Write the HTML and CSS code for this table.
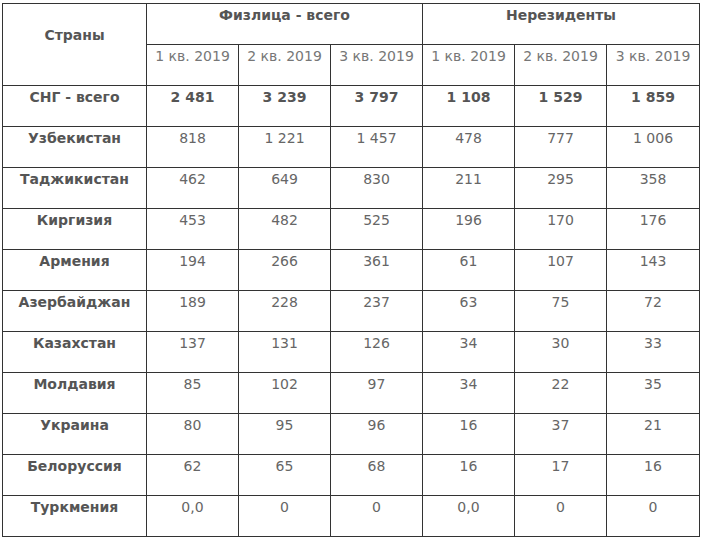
FILE: index.html
```html
<!DOCTYPE html>
<html lang="ru">
<head>
<meta charset="utf-8">
<title>Страны</title>
<link rel="stylesheet" href="styles.css">
</head>
<body>
<table class="data">
  <colgroup>
    <col class="c-country">
    <col class="c-num"><col class="c-num"><col class="c-num">
    <col class="c-num"><col class="c-num"><col class="c-last">
  </colgroup>
  <thead>
    <tr>
      <th rowspan="2" class="country-head">Страны</th>
      <th colspan="3" class="group">Физлица - всего</th>
      <th colspan="3" class="group">Нерезиденты</th>
    </tr>
    <tr class="sub">
      <td>1 кв. 2019</td><td>2 кв. 2019</td><td>3 кв. 2019</td>
      <td>1 кв. 2019</td><td>2 кв. 2019</td><td>3 кв. 2019</td>
    </tr>
  </thead>
  <tbody>
    <tr class="total"><th>СНГ - всего</th><td>2 481</td><td>3 239</td><td>3 797</td><td>1 108</td><td>1 529</td><td>1 859</td></tr>
    <tr><th>Узбекистан</th><td>818</td><td>1 221</td><td>1 457</td><td>478</td><td>777</td><td>1 006</td></tr>
    <tr><th>Таджикистан</th><td>462</td><td>649</td><td>830</td><td>211</td><td>295</td><td>358</td></tr>
    <tr><th>Киргизия</th><td>453</td><td>482</td><td>525</td><td>196</td><td>170</td><td>176</td></tr>
    <tr><th>Армения</th><td>194</td><td>266</td><td>361</td><td>61</td><td>107</td><td>143</td></tr>
    <tr><th>Азербайджан</th><td>189</td><td>228</td><td>237</td><td>63</td><td>75</td><td>72</td></tr>
    <tr><th>Казахстан</th><td>137</td><td>131</td><td>126</td><td>34</td><td>30</td><td>33</td></tr>
    <tr><th>Молдавия</th><td>85</td><td>102</td><td>97</td><td>34</td><td>22</td><td>35</td></tr>
    <tr><th>Украина</th><td>80</td><td>95</td><td>96</td><td>16</td><td>37</td><td>21</td></tr>
    <tr><th>Белоруссия</th><td>62</td><td>65</td><td>68</td><td>16</td><td>17</td><td>16</td></tr>
    <tr><th>Туркмения</th><td>0,0</td><td>0</td><td>0</td><td>0,0</td><td>0</td><td>0</td></tr>
  </tbody>
</table>
</body>
</html>
```

FILE: styles.css
```css
html, body {
  margin: 0;
  padding: 0;
  background: #ffffff;
}

body {
  padding: 3px 0 0 2px;
  font-family: "DejaVu Sans", Verdana, sans-serif;
  font-size: 14px;
  color: #666666;
}

.data {
  border-collapse: collapse;
  table-layout: fixed;
  width: 698px;
}

.c-country { width: 144px; }
.c-num { width: 92px; }
.c-last { width: 93px; }

.data th,
.data td {
  border: 1px solid #333333;
  height: 41px;
  box-sizing: border-box;
  padding: 3px 1px 0;
  line-height: 16px;
  text-align: center;
  vertical-align: top;
  white-space: nowrap;
}

.data th {
  font-weight: bold;
  color: #555555;
}

.data .country-head {
  padding-top: 23px;
}

.data .group {
  padding-top: 3px;
}

.sub td {
  color: #777777;
}

.total td {
  font-weight: bold;
  color: #555555;
}
```
